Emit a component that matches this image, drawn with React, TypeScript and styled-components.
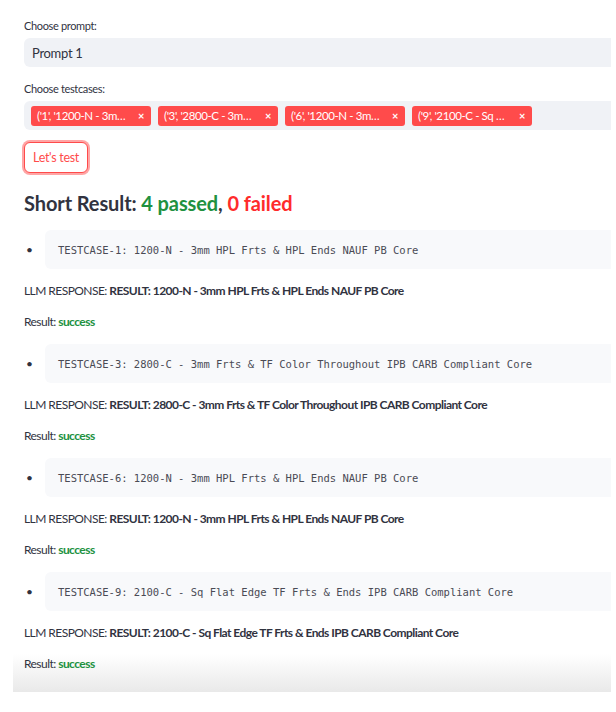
import React from "react";
import styled, { createGlobalStyle } from "styled-components";

const Global = createGlobalStyle`
  html, body { margin: 0; padding: 0; background: #ffffff; }
  body { font-family: "Lato", "Noto Sans", sans-serif; color: #31333f; letter-spacing: -0.55px; }
`;

const Page = styled.div`
  margin-left: 13px;
  width: 598px;
  padding: 19px 0 19px 11px;
  box-sizing: border-box;
  display: flex;
  flex-direction: column;
  background: linear-gradient(to bottom, #ffffff 0, #ffffff calc(100% - 38px), #e9e9e9 100%);
`;

const Label = styled.div<{ $mt?: number }>`
  font-size: 11px;
  line-height: 14px;
  color: #31333f;
  letter-spacing: -0.35px;
  margin-top: ${(p) => p.$mt ?? 0}px;
  margin-bottom: 5px;
`;

const SelectBox = styled.div`
  height: 29px;
  background: #f0f2f6;
  border-radius: 6px 0 0 6px;
  display: flex;
  align-items: center;
  padding-left: 8px;
  font-size: 13px;
  letter-spacing: -0.3px;
  color: #31333f;
`;

const MultiBox = styled.div`
  height: 29px;
  background: #f0f2f6;
  border-radius: 6px 0 0 6px;
  display: flex;
  align-items: center;
  padding-left: 7px;
  gap: 7px;
`;

const Tag = styled.div`
  width: 120px;
  height: 20px;
  box-sizing: border-box;
  background: #ff4b4b;
  border-radius: 3px;
  color: #ffffff;
  font-size: 11.5px;
  letter-spacing: -0.4px;
  display: flex;
  align-items: center;
  justify-content: space-between;
  padding: 0 7px 0 6px;
  white-space: nowrap;
`;

const TagClose = styled.span`
  font-size: 11px;
  font-weight: 700;
`;

const Button = styled.button`
  align-self: flex-start;
  margin-top: 12px;
  height: 31px;
  width: 64px;
  padding: 0;
  background: #ffffff;
  border: 1px solid #ff4b4b;
  border-radius: 6px;
  box-shadow: 0 0 0 2px rgba(255, 75, 75, 0.5);
  color: #ff4b4b;
  font-family: inherit;
  font-size: 12.5px;
  letter-spacing: -0.3px;
`;

const Heading = styled.h2`
  margin: 15px 0 0 0;
  font-size: 20px;
  line-height: 30px;
  font-weight: 700;
  letter-spacing: -0.1px;
  color: #31333f;
`;

const Pass = styled.span`
  color: #21913f;
`;
const Fail = styled.span`
  color: #ff2b2b;
`;

const List = styled.div`
  display: flex;
  flex-direction: column;
  gap: 13px;
  margin-top: 12px;
`;

const Item = styled.div`
  display: flex;
  flex-direction: column;
`;

const BulletRow = styled.div`
  display: flex;
  align-items: center;
`;

const Bullet = styled.span`
  width: 21px;
  font-size: 12px;
  padding-left: 2px;
  box-sizing: border-box;
`;

const CodeBlock = styled.div`
  flex: 1;
  height: 39px;
  background: #f8f9fb;
  border-radius: 6px 0 0 6px;
  display: flex;
  align-items: center;
  padding-left: 13px;
  font-family: "DejaVu Sans Mono", "Liberation Mono", monospace;
  font-size: 10.5px;
  letter-spacing: 0;
  color: #4a4b55;
  white-space: pre;
`;

const Line = styled.div`
  margin-top: 13px;
  font-size: 12px;
  line-height: 18px;
  color: #31333f;
`;

const Strong = styled.b`
  font-weight: 700;
`;

const Success = styled.b`
  font-weight: 700;
  color: #21913f;
`;

const tags = [
  "('1', '1200-N - 3m…",
  "('3', '2800-C - 3m…",
  "('6', '1200-N - 3m…",
  "('9', '2100-C - Sq …",
];

const cases = [
  { id: 1, text: "1200-N - 3mm HPL Frts & HPL Ends NAUF PB Core" },
  { id: 3, text: "2800-C - 3mm Frts & TF Color Throughout IPB CARB Compliant Core" },
  { id: 6, text: "1200-N - 3mm HPL Frts & HPL Ends NAUF PB Core" },
  { id: 9, text: "2100-C - Sq Flat Edge TF Frts & Ends IPB CARB Compliant Core" },
];

export default function App() {
  return (
    <>
      <Global />
      <Page>
        <Label>Choose prompt:</Label>
        <SelectBox>Prompt 1</SelectBox>
        <Label $mt={15}>Choose testcases:</Label>
        <MultiBox>
          {tags.map((t) => (
            <Tag key={t}>
              <span>{t}</span>
              <TagClose>×</TagClose>
            </Tag>
          ))}
        </MultiBox>
        <Button>Let's test</Button>
        <Heading>
          Short Result: <Pass>4 passed</Pass>, <Fail>0 failed</Fail>
        </Heading>
        <List>
          {cases.map((c) => (
            <Item key={c.id}>
              <BulletRow>
                <Bullet>•</Bullet>
                <CodeBlock>{`TESTCASE-${c.id}: ${c.text}`}</CodeBlock>
              </BulletRow>
              <Line>
                LLM RESPONSE: <Strong>RESULT: {c.text}</Strong>
              </Line>
              <Line>
                Result: <Success>success</Success>
              </Line>
            </Item>
          ))}
        </List>
      </Page>
    </>
  );
}
